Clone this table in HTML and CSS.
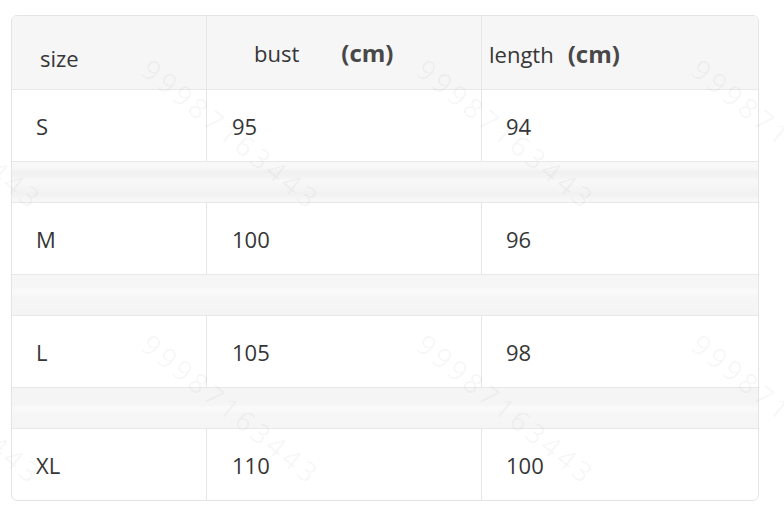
FILE: index.html
```html
<!DOCTYPE html>
<html>
<head>
<meta charset="utf-8">
<link rel="stylesheet" href="styles.css">
</head>
<body>
<div class="page">
  <div class="table">
    <div class="row head">
      <div class="cell c1"><span class="h-size">size</span></div>
      <div class="cell c2"><span class="h-bust">bust</span><span class="unit unit-bust">(cm)</span></div>
      <div class="cell c3"><span class="h-length">length</span><span class="unit unit-length">(cm)</span></div>
    </div>
    <div class="row data">
      <div class="cell c1">S</div>
      <div class="cell c2">95</div>
      <div class="cell c3">94</div>
    </div>
    <div class="spacer s1"></div>
    <div class="row data">
      <div class="cell c1">M</div>
      <div class="cell c2">100</div>
      <div class="cell c3">96</div>
    </div>
    <div class="spacer s2"></div>
    <div class="row data">
      <div class="cell c1">L</div>
      <div class="cell c2">105</div>
      <div class="cell c3">98</div>
    </div>
    <div class="spacer s3"></div>
    <div class="row data last">
      <div class="cell c1">XL</div>
      <div class="cell c2">110</div>
      <div class="cell c3">100</div>
    </div>
  </div>
  <div class="wm w1">99987163443</div>
  <div class="wm w2">99987163443</div>
  <div class="wm w3">99987163443</div>
  <div class="wm w4">99987163443</div>
  <div class="wm w5">99987163443</div>
  <div class="wm w6">99987163443</div>
  <div class="wm w7">99987163443</div>
  <div class="wm w8">99987163443</div>
</div>
</body>
</html>
```
FILE: styles.css
```css
html, body {
  margin: 0;
  padding: 0;
  background: #ffffff;
}
.page {
  position: relative;
  width: 784px;
  height: 514px;
  overflow: hidden;
  padding: 15px 0 0 11px;
  box-sizing: border-box;
  font-family: "Open Sans", "Noto Sans", sans-serif;
  color: #363636;
}
.table {
  width: 748px;
  border: 1px solid #e4e4e4;
  border-radius: 6px;
  overflow: hidden;
  box-sizing: border-box;
  background: #fff;
}
.row {
  display: grid;
  grid-template-columns: 195px 275px 1fr;
  border-bottom: 1px solid #e8e8e8;
}
.row.last {
  border-bottom: none;
}
.cell {
  display: flex;
  align-items: center;
  font-size: 22px;
  line-height: 30px;
  box-sizing: border-box;
}
.c1, .c2 {
  border-right: 1px solid #e6e6e6;
}
.head {
  height: 73px;
  background: #f6f6f6;
}
.head .cell {
  align-items: flex-start;
  font-size: 22px;
}
.head .c1 { padding: 27px 0 0 28px; }
.head .c2 { padding: 22px 0 0 47px; }
.head .c3 { padding: 23px 0 0 7px; }
.unit {
  font-weight: 700;
  font-size: 24px;
  color: #484848;
  position: relative;
  top: 0;
}
.unit-bust { margin-left: 42px; }
.unit-length { margin-left: 14px; }
.data {
  height: 71px;
}
.data .c1 { padding-left: 24px; }
.data .c2 { padding-left: 25px; }
.data .c3 { padding-left: 24px; }
.spacer {
  height: 40px;
  border-bottom: 1px solid #e8e8e8;
  background: #f6f6f6;
}
.s1 {
  background:
    linear-gradient(to bottom,
      #f8f8f8 0px, #f8f8f8 6px,
      #f0f0f0 10px, #f2f2f2 14px,
      #f8f8f8 18px, #f5f5f5 26px,
      #f1f1f1 32px, #f7f7f7 38px, #f7f7f7 40px);
}
.s2 {
  background:
    linear-gradient(to bottom,
      #f6f6f6 0px, #f6f6f6 12px,
      #fafafa 16px, #f6f6f6 22px, #f4f4f4 40px);
}
.s3 {
  background:
    linear-gradient(to bottom,
      #f5f5f5 0px, #f5f5f5 16px,
      #fafafa 20px, #f6f6f6 26px, #f5f5f5 40px);
}
.wm {
  position: absolute;
  font-family: "Open Sans", sans-serif;
  font-size: 28px;
  letter-spacing: 4px;
  color: rgba(0, 0, 0, 0.045);
  transform-origin: 0 0;
  transform: rotate(39deg);
  white-space: nowrap;
  pointer-events: none;
}
.w1 { left: -120px; top: 50px; }
.w2 { left: 158px; top: 50px; }
.w3 { left: 433px; top: 50px; }
.w4 { left: 708px; top: 50px; }
.w5 { left: -120px; top: 325px; }
.w6 { left: 158px; top: 325px; }
.w7 { left: 433px; top: 325px; }
.w8 { left: 708px; top: 325px; }
```
